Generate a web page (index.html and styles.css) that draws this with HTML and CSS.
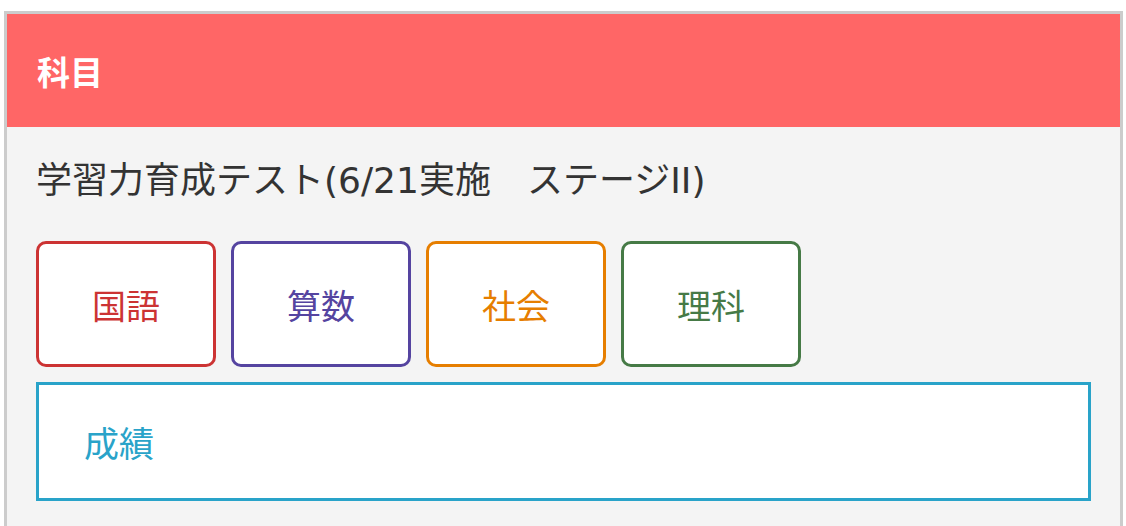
FILE: index.html
```html
<!DOCTYPE html>
<html lang="ja">
<head>
  <meta charset="UTF-8" />
  <meta name="viewport" content="width=device-width, initial-scale=1.0"/>
  <title>科目</title>
  <link rel="stylesheet" href="styles.css">
</head>
<body>
  <!-- 科目パネル -->
  <div class="panel">
    <div class="panel-head">科目</div>
    <div class="panel-body">
      <p class="test-name">学習力育成テスト(6/21実施　ステージII)</p>

      <div class="subjects">
        <a class="subject kokugo" href="#">国語</a>
        <a class="subject sansu" href="#">算数</a>
        <a class="subject shakai" href="#">社会</a>
        <a class="subject rika" href="#">理科</a>
      </div>

      <a class="results" href="#">成績</a>
    </div>
  </div>
</body>
</html>
```

FILE: styles.css
```css
html, body {
  margin: 0;
  padding: 0;
  background: #fff;
  font-family: 'DejaVu Sans', 'Noto Sans CJK JP', sans-serif;
  color: #333;
}

body {
  padding: 11px 3px 0 4px;
}

.panel {
  border: 3px solid #cccccc;
  border-bottom: none;
  background: #f4f4f4;
}

.panel-head {
  display: flex;
  align-items: center;
  height: 113px;
  padding: 0 30px;
  background: #ff6666;
  color: #fff;
  font-size: 33px;
  font-weight: bold;
}

.panel-body {
  padding: 30px 29px 40px;
}

.test-name {
  margin: 0 0 36px;
  font-size: 36px;
  line-height: 48px;
  color: #333;
}

.subjects {
  display: flex;
  gap: 15px;
}

.subject {
  display: flex;
  align-items: center;
  justify-content: center;
  box-sizing: border-box;
  width: 180px;
  height: 126px;
  border: 3px solid;
  border-radius: 10px;
  background: #fff;
  font-size: 34px;
  text-decoration: none;
}

.kokugo { color: #cc3333; border-color: #cc3333; }
.sansu  { color: #5544a0; border-color: #5544a0; }
.shakai { color: #e67e00; border-color: #e67e00; }
.rika   { color: #467a46; border-color: #467a46; }

.results {
  display: flex;
  align-items: center;
  box-sizing: border-box;
  height: 119px;
  margin-top: 15px;
  padding-left: 45px;
  border: 3px solid #29a3c9;
  background: #fff;
  color: #29a3c9;
  font-size: 35px;
  text-decoration: none;
}
```
